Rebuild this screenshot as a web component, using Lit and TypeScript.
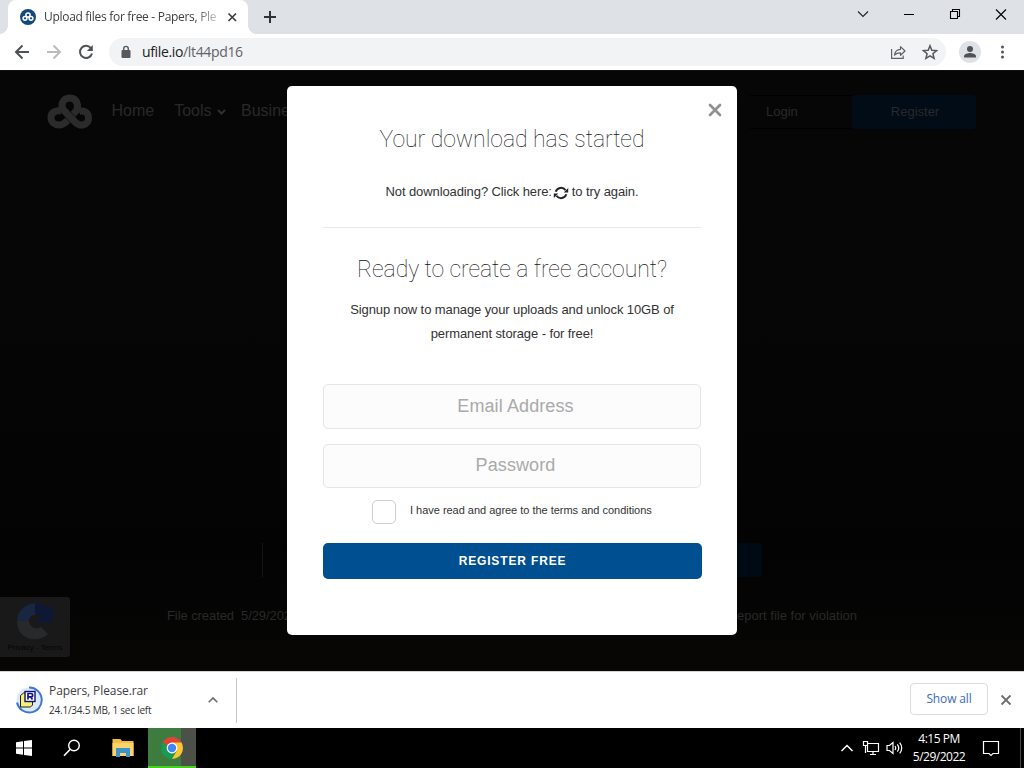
import { LitElement, html, css, svg } from "lit";
import { customElement } from "lit/decorators.js";

const leftStrand = "M14.500 17.500C9 15.500 4 18.500 4 23.500C4 28.500 8 31 12 31C15.500 31 18 29 20 27L29 17C32 13 30.500 4 23 4";
const rightStrand = "M23 4C15 4 13 12 17 16.500L28 28C30.500 30.500 33 31.500 36 31C40 30 42 27 41.500 23C41 18 36.500 16 32 17.500";
const cloud = svg`
  <g fill="none" stroke-linecap="butt" stroke-linejoin="round">
    <path d=${leftStrand} stroke="currentColor" stroke-width="7"/>
    <path d="M17 16.500L28 28" stroke="#080707" stroke-width="8"/>
    <path d=${rightStrand} stroke="currentColor" stroke-width="7"/>
  </g>`;

@customElement("browser-chrome")
class BrowserChrome extends LitElement {
  static styles = css`
    :host { display: block; height: 71px; font-family: "Open Sans", "Noto Sans", sans-serif; color: #3c4043; }
    svg { display: block; flex: none; }
    .strip { height: 34px; background: #dee1e6; display: flex; align-items: stretch; padding-left: 8px; }
    .tab { position: relative; box-sizing: border-box; width: 240px; background: #fff; border-radius: 8px 8px 0 0; display: flex; align-items: center; padding-left: 12px; }
    .tab::before, .tab::after { content: ""; position: absolute; bottom: 0; width: 8px; height: 8px; }
    .tab::before { left: -8px; background: radial-gradient(circle at 0 0, transparent 7.5px, #fff 8px); }
    .tab::after { right: -8px; background: radial-gradient(circle at 100% 0, transparent 7.5px, #fff 8px); }
    .title { width: 174px; margin-left: 8px; white-space: nowrap; font-size: 12px; letter-spacing: -0.3px; line-height: 34px; -webkit-mask-image: linear-gradient(90deg, #000 150px, rgba(0,0,0,.25)); mask-image: linear-gradient(90deg, #000 150px, rgba(0,0,0,.25)); }
    .tabclose { margin-left: 6px; }
    .plus { margin: 10px 0 0 15px; }
    .controls { margin-left: auto; display: flex; }
    .controls svg { width: 46px; height: 28px; }
    .bar { height: 36px; background: #fff; display: flex; align-items: center; border-bottom: 1px solid #111; }
    .nav { display: flex; gap: 16px; padding-left: 14px; }
    .omni { margin-left: 15px; width: 837px; box-sizing: border-box; height: 28px; border-radius: 14px; background: #f1f3f4; display: flex; align-items: center; padding: 0 8px 0 11px; }
    .url { font-size: 14px; margin-left: 10px; letter-spacing: -0.35px; color: #202124; flex: 1; line-height: 28px; }
    .url span { color: #5f6368; }
    .share { margin-right: 16px; }
    .avatar { margin-left: 13px; }
    .menu { margin-left: 14px; }
  `;
  render() {
    return html`
      <div class="strip">
        <div class="tab">
          <svg width="16" height="16" viewBox="0 0 16 16"><circle cx="8" cy="8" r="8" fill="#13477d"/>
            <g fill="none" stroke="#fff" stroke-width="1.500"><circle cx="8" cy="6" r="2.100"/><circle cx="5" cy="9.300" r="1.900"/><circle cx="11" cy="9.300" r="1.900"/></g></svg>
          <div class="title">Upload files for free - Papers, Ple</div>
          <svg class="tabclose" width="16" height="16" viewBox="0 0 16 16"><path d="M4.500 4.500l7.500 7.500M12 4.500L4.500 12" stroke="#3c4043" stroke-width="1.700"/></svg>
        </div>
        <svg class="plus" width="14" height="14" viewBox="0 0 14 14"><path d="M7 1v12M1 7h12" stroke="#2f3236" stroke-width="2"/></svg>
        <div class="controls">
          <svg viewBox="0 0 46 28"><path d="M18 11.500l5 5 5-5" fill="none" stroke="#222" stroke-width="1.100"/></svg>
          <svg viewBox="0 0 46 28"><path d="M18 14.500h10" stroke="#000"/></svg>
          <svg viewBox="0 0 46 28"><path d="M18.500 11.500h7v7h-7zM20.500 11.500v-2h7v7h-2" fill="none" stroke="#000" stroke-width="1.100"/></svg>
          <svg viewBox="0 0 46 28"><path d="M18 9.500l10 10M28 9.500l-10 10" stroke="#000" stroke-width="1.100"/></svg>
        </div>
      </div>
      <div class="bar">
        <div class="nav">
          <svg width="16" height="16" viewBox="0 0 16 16"><path d="M15 8H2.500M8.500 1.500L2 8l6.500 6.500" fill="none" stroke="#4e5256" stroke-width="2"/></svg>
          <svg width="16" height="16" viewBox="0 0 16 16"><path d="M1 8h12.500M7.500 1.500L14 8l-6.500 6.500" fill="none" stroke="#b9bbbe" stroke-width="2"/></svg>
          <svg width="16" height="16" viewBox="0 0 16 16"><path d="M13.200 4.500A6.100 6.100 0 1 0 14 9.500" fill="none" stroke="#4e5256" stroke-width="2"/><path d="M14.800 1v6h-6z" fill="#4e5256"/></svg>
        </div>
        <div class="omni">
          <svg width="12" height="14" viewBox="0 0 12 14"><rect x="1.500" y="5" width="9" height="8" rx="1" fill="#55595e"/><path d="M3.700 5.500V3.700a2.300 2.300 0 0 1 4.600 0v1.800" fill="none" stroke="#55595e" stroke-width="1.400"/></svg>
          <div class="url">ufile.io<span>/lt44pd16</span></div>
          <svg class="share" width="16" height="16" viewBox="0 0 16 16"><g fill="none" stroke="#5f6368" stroke-width="1.200"><path d="M1.600 5v9.400h11.600v-3"/><path d="M4.500 11c.5-3.700 2.500-5.600 6-5.700V2.600L15 7l-4.500 4.300V8.800C7.800 8.800 6 9.400 4.500 11z" stroke-linejoin="round"/></g></svg>
          <svg width="16" height="16" viewBox="0 0 16 16"><path d="M8 1.700l1.800 4.500 4.800.4-3.700 3.100 1.200 4.700L8 11.900l-4.100 2.500 1.200-4.700L1.400 6.600l4.800-.4z" fill="none" stroke="#55595e" stroke-width="1.500"/></svg>
        </div>
        <svg class="avatar" width="22" height="22" viewBox="0 0 22 22"><circle cx="11" cy="11" r="11" fill="#dee1e6"/><circle cx="11" cy="8" r="3" fill="#4f5358"/><path d="M5 16.500v-1.200c0-2.200 4-3.300 6-3.300s6 1.100 6 3.300v1.200z" fill="#4f5358"/></svg>
        <svg class="menu" width="16" height="16" viewBox="0 0 16 16"><g fill="#4f5358"><circle cx="7.500" cy="3" r="1.500"/><circle cx="7.500" cy="8" r="1.500"/><circle cx="7.500" cy="13" r="1.500"/></g></svg>
      </div>`;
  }
}

@customElement("signup-modal")
class SignupModal extends LitElement {
  static styles = css`
    :host { display: block; box-sizing: border-box; width: 450px; height: 549px; padding: 38px 36px 0; background: #fff; border-radius: 5px; text-align: center; font-family: "Liberation Sans", Arial, sans-serif; font-size: 13px; color: #333; position: relative; }
    .x { position: absolute; right: 15px; top: 17px; display: block; }
    h2 { margin: 0; font-family: Roboto, sans-serif; font-weight: 100; font-size: 23px; letter-spacing: -.07px; line-height: 32px; color: #111; }
    .retry { display: flex; justify-content: center; align-items: center; height: 20px; margin-top: 25px; white-space: pre; letter-spacing: -.1px; }
    .retry svg { display: block; margin: 4px 3px 0 1px; }
    hr { border: 0; height: 1px; margin: 26px 0 26px; background: #e8e8e8; }
    p { margin: 12px 0 38px; line-height: 24px; letter-spacing: -.1px; }
    .field { box-sizing: border-box; height: 45px; border: 1px solid #e6e6e6; border-radius: 5px; background: #fcfcfc; color: #aaa; font-size: 18px; line-height: 42px; padding-left: 7px; margin-bottom: 15px; letter-spacing: .1px; }
    .field.second { height: 44px; margin-bottom: 12px; line-height: 40px; }
    .terms { display: flex; align-items: center; gap: 14px; padding-left: 49px; font-size: 11px; height: 24px; letter-spacing: -.02px; }
    .terms span { padding-bottom: 4px; white-space: nowrap; }
    .check { box-sizing: border-box; width: 24px; height: 24px; border: 1px solid #ccc; border-radius: 5px; background: #fff; }
    button { display: block; width: 379px; height: 36px; margin-top: 19px; padding: 0; border: 0; border-radius: 5px; background: #004f91; color: #fff; font: bold 12px "Liberation Sans", Arial, sans-serif; letter-spacing: .85px; }
  `;
  render() {
    return html`
      <svg class="x" width="14" height="14" viewBox="0 0 14 14"><path d="M2 2l10 10M12 2L2 12" stroke="#909090" stroke-width="2.700" stroke-linecap="round"/></svg>
      <h2>Your download has started</h2>
      <div class="retry"><span>Not downloading? Click here:</span><svg width="16" height="14" viewBox="0 0 16 14"><g fill="none" stroke="#222" stroke-width="2"><path d="M2.700 5.700A5.500 5.500 0 0 1 12.500 4.300"/><path d="M13.300 8.300A5.500 5.500 0 0 1 3.500 9.700"/></g><path d="M15.200 2v4.500H10.700zM.8 12V7.500h4.500z" fill="#222"/></svg><span>to try again.</span></div>
      <hr>
      <h2>Ready to create a free account?</h2>
      <p>Signup now to manage your uploads and unlock 10GB of<br>permanent storage - for free!</p>
      <div class="field">Email Address</div>
      <div class="field second">Password</div>
      <div class="terms"><div class="check"></div><span>I have read and agree to the terms and conditions</span></div>
      <button>REGISTER FREE</button>`;
  }
}

@customElement("site-page")
class SitePage extends LitElement {
  static styles = css`
    :host { display: flex; flex-direction: column; position: relative; height: 600px; overflow: hidden; background: linear-gradient(180deg, #070606, #050505 55%, #030303 80%, #070605); font-family: "Liberation Sans", Arial, sans-serif; color: #292929; }
    header { display: flex; align-items: center; height: 80px; padding: 0 48px 0 47px; font-size: 16px; white-space: nowrap; }
    .logo { display: block; color: #2b2b2b; margin-right: 18.500px; margin-top: 2px; }
    .home { margin-right: 20px; }
    .chev { margin: 2px 15.500px 0 5px; }
    .auth { margin-left: auto; display: flex; font-size: 13px; line-height: 32px; margin-top: 1px; }
    .login { width: 102px; box-sizing: border-box; padding-left: 16px; border: solid #000; border-width: 1px 0; line-height: 32px; }
    .register { width: 124px; box-sizing: border-box; padding-left: 2px; text-align: center; background: #010c17; border-radius: 4px; line-height: 33px; }
    .file { margin: 392px 262px 0; height: 34px; display: flex; justify-content: space-between; border-left: 1px solid #141414; }
    .get { width: 100px; background: #000a14; border-radius: 4px; }
    .meta { display: flex; justify-content: space-between; padding: 0 167px; margin-top: 30px; font-size: 13px; line-height: 18px; white-space: pre; }
    .created { letter-spacing: -.08px; }
    .badge { position: absolute; left: 0; top: 526px; width: 70px; height: 60px; background: #191919; border-radius: 0 3px 3px 0; text-align: center; font-size: 8px; color: #050505; }
    .badge svg { display: block; margin: 5px auto 0; }
    .badge span { display: block; line-height: 10px; padding-top: 2px; }
    .layer { position: absolute; inset: 0; display: flex; justify-content: center; align-items: flex-start; padding-top: 15px; }
  `;
  render() {
    return html`
      <header>
        <svg class="logo" width="46" height="36" viewBox="0 0 46 36">${cloud}</svg>
        <span class="home">Home</span><span>Tools</span>
        <svg class="chev" width="9" height="6" viewBox="0 0 9 6"><path d="M1 1l3.500 3.500L8 1" fill="none" stroke="#303030" stroke-width="2"/></svg>
        <span>Business</span>
        <div class="auth"><div class="login">Login</div><div class="register">Register</div></div>
      </header>
      <div class="file"><span></span><div class="get"></div></div>
      <div class="meta"><span class="created">File created  5/29/2022</span><span>Report file for violation</span></div>
      <div class="badge">
        <svg width="38" height="39" viewBox="0 0 38 39"><path d="M2 19C2 9 9 1 19 1c6 0 10 2 13 6l5-5v18H19l6-6c-4-4-10-2-12 5z" fill="#0c1834"/><path d="M1 19h12c1 7 8 9 12 6l7 7C22 42 1 38 1 19z" fill="#28292b"/><path d="M1 19C1 10 8 2 19 1v12c-4 0-6 3-6 6z" fill="#182640"/></svg>
        <span>Privacy - Terms</span>
      </div>
      <div class="layer"><signup-modal></signup-modal></div>`;
  }
}

@customElement("download-shelf")
class DownloadShelf extends LitElement {
  static styles = css`
    :host { box-sizing: border-box; display: flex; align-items: center; height: 57px; background: #fff; border-top: 1px solid #d4d4d4; font-family: "Open Sans", "Noto Sans", sans-serif; color: #3c4043; }
    svg { display: block; flex: none; }
    .item { display: flex; align-items: center; box-sizing: border-box; width: 237px; height: 45px; padding: 0 18px 0 15px; border-right: 1px solid #c4c6c9; }
    .text { flex: 1; margin-left: 6px; white-space: nowrap; }
    .name { font-size: 12px; line-height: 18px; letter-spacing: -.09px; padding-top: 1px; }
    .size { font-size: 10px; line-height: 16px; margin: 2px 0 1px; letter-spacing: -.22px; color: #333; }
    .all { box-sizing: border-box; margin-left: auto; width: 78px; height: 32px; border: 1px solid #dadce0; border-radius: 4px; color: #3b6db8; font-size: 12px; line-height: 30px; text-align: center; letter-spacing: -.15px; font-weight: 500; margin-bottom: 2px; }
    .close { margin: 0 12px 0 12px; }
  `;
  render() {
    return html`
      <div class="item">
        <svg width="28" height="28" viewBox="0 0 28 28"><circle cx="14" cy="14" r="12.500" fill="#dce9f8"/><path d="M14 1.500a12.500 12.500 0 1 1-12 15" fill="none" stroke="#3f78d4" stroke-width="2"/>
          <path d="M5.500 9.500l3-2.500h9v12l-2 2h-10z" fill="#f5f07a" stroke="#222" /><rect x="10" y="5.500" width="10" height="10" fill="#fff" stroke="#10106e" stroke-width="1.400"/><path d="M13 13.500v-6h3a1.600 1.600 0 0 1 0 3.300h-3M15.500 10.800l2 2.700" fill="none" stroke="#11118e" stroke-width="1.700"/></svg>
        <div class="text"><div class="name">Papers, Please.rar</div><div class="size">24.1/34.5 MB, 1 sec left</div></div>
        <svg width="10" height="8" viewBox="0 0 10 8"><path d="M.7 6.300L5 2l4.300 4.300" fill="none" stroke="#6a6d71" stroke-width="1.600"/></svg>
      </div>
      <div class="all">Show all</div>
      <svg class="close" width="12" height="12" viewBox="0 0 12 12"><path d="M1.500 1.500l9 9M10.500 1.500l-9 9" stroke="#6a6d71" stroke-width="1.800"/></svg>`;
  }
}

@customElement("task-bar")
class TaskBar extends LitElement {
  static styles = css`
    :host { display: flex; height: 40px; background: #000; color: #fff; font-family: "Open Sans", "Noto Sans", sans-serif; }
    svg { display: block; flex: none; }
    .apps { display: flex; }
    .cell { width: 48px; height: 40px; display: flex; align-items: center; justify-content: center; }
    .files { width: 52px; box-sizing: border-box; padding-left: 1px; }
    .active { box-sizing: border-box; border-bottom: 2px solid #44d01c; padding-top: 2px; background: linear-gradient(90deg, #3d7b3e 33px, #4b5148 33px); }
    .tray { margin-left: auto; display: flex; align-items: center; }
    .tray svg { margin-right: 6px; }
    .tray .up { margin-right: 8px; }
    .tray .sound { margin-right: 5px; }
    .clock { width: 60px; text-align: center; font-size: 12px; line-height: 18px; letter-spacing: -.5px; white-space: nowrap; padding-bottom: 1px; }
    .tray .note { margin: 0 20px 0 13px; }
    .edge { width: 1px; height: 40px; background: #444; margin-right: 3px; }
  `;
  render() {
    return html`
      <div class="apps">
        <div class="cell"><svg width="16" height="16" viewBox="0 0 16 16"><path d="M0 2.200l7-1v6.300H0zM8 1.100L16 0v7.500H8zM0 8.500h7v6.300l-7-1zM8 8.500h8V16l-8-1.100z" fill="#fff"/></svg></div>
        <div class="cell"><svg width="18" height="18" viewBox="0 0 18 18"><circle cx="11" cy="6.500" r="5.300" fill="none" stroke="#fff" stroke-width="1.400"/><path d="M7 10.500L1 16.800" stroke="#fff" stroke-width="1.600"/></svg></div>
        <div class="cell files"><svg width="22" height="18" viewBox="0 0 22 18"><path d="M.5 0h8l1.500 2h11.500v15H.5z" fill="#f4bd42"/><path d="M.5 4h21v13H.5z" fill="#fbd36c"/><path d="M4 9h14v9h-4v-4H8v4H4z" fill="#3c94c8"/></svg></div>
        <div class="cell active"><svg width="22" height="22" viewBox="0 0 22 22"><path d="M11 11L1.500 5.500A11 11 0 0 1 20.500 5.500z" fill="#e24335"/><path d="M11 11L1.500 5.500A11 11 0 0 0 11 22l4.800-8.300z" fill="#189b53"/><path d="M11 11l4.800 2.700L11 22a11 11 0 0 0 9.500-16.500H11z" fill="#fbc62f"/><circle cx="11" cy="11" r="5.400" fill="#fff"/><circle cx="11" cy="11" r="4.200" fill="#4285f4"/></svg></div>
      </div>
      <div class="tray">
        <svg class="up" width="14" height="10" viewBox="0 0 14 10"><path d="M1.500 8L7 2.500 12.500 8" fill="none" stroke="#fff" stroke-width="1.500"/></svg>
        <svg width="18" height="16" viewBox="0 0 18 16"><g fill="none" stroke="#fff" stroke-width="1.200"><path d="M6 3.500h10.500v8H5.500V6M8 14.500h6M11 11.500v3M1.500 1.500h4v4h-4zM3.500 5.500v7.500"/></g></svg>
        <svg class="sound" width="18" height="16" viewBox="0 0 18 16"><g fill="none" stroke="#fff" stroke-width="1.200"><path d="M1 5.500h2.500L7 2.500v11L3.500 10.500H1z"/><path d="M9 6a3.500 3.500 0 0 1 0 4M11.300 4.300a6 6 0 0 1 0 7.400M13.700 2.600a9 9 0 0 1 0 10.800"/></g></svg>
        <div class="clock">4:15 PM<br>5/29/2022</div>
        <svg class="note" width="18" height="18" viewBox="0 0 18 18"><path d="M1.500 2.500h15v12H11L9 16.500l-2-2H1.500z" fill="none" stroke="#fff" stroke-width="1.200"/></svg>
        <div class="edge"></div>
      </div>`;
  }
}

@customElement("app-root")
class AppRoot extends LitElement {
  static styles = css`
    :host { display: block; width: 1024px; height: 768px; overflow: hidden; }
  `;
  render() {
    return html`<browser-chrome></browser-chrome><site-page></site-page><download-shelf></download-shelf><task-bar></task-bar>`;
  }
}
